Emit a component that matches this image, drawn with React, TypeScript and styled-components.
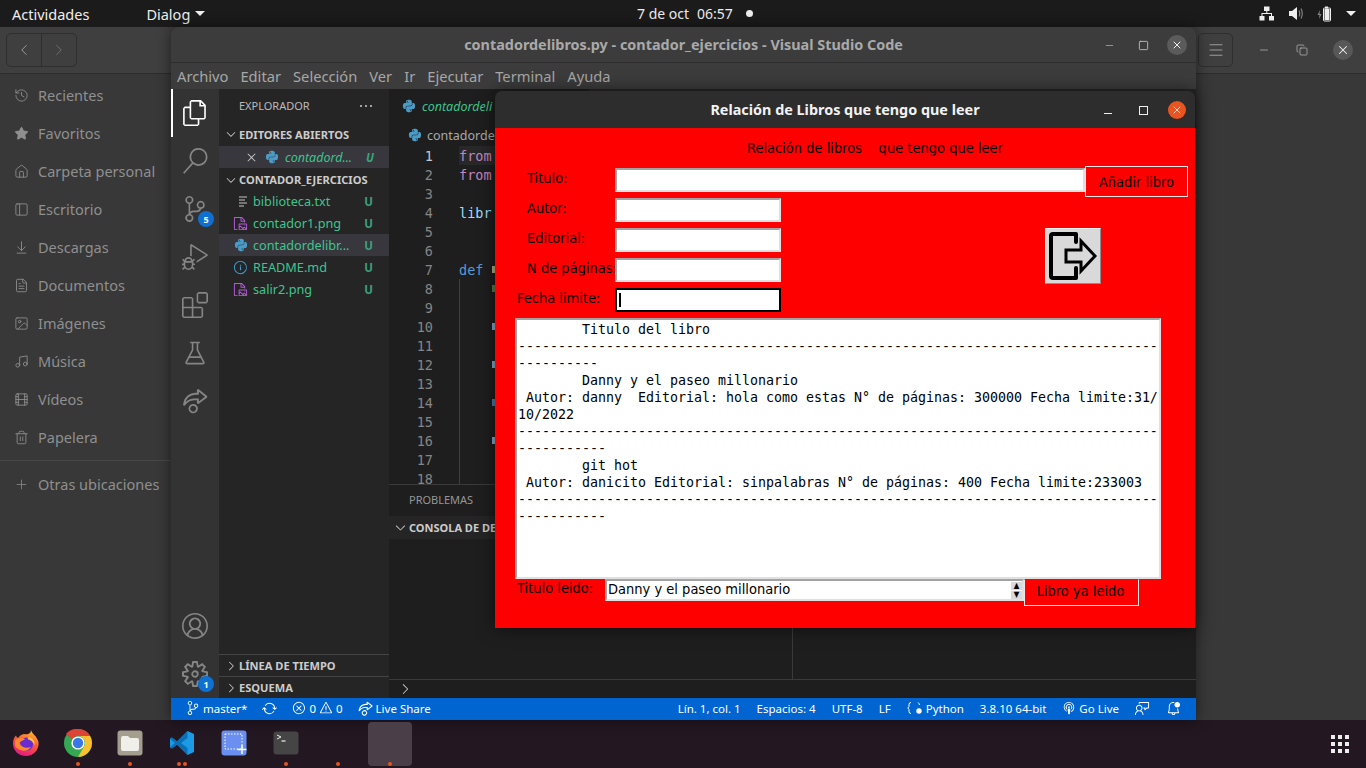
import React from 'react'
import styled, { createGlobalStyle } from 'styled-components'
import {
  VscFiles,
  VscSearch,
  VscSourceControl,
  VscDebugAlt,
  VscExtensions,
  VscBeaker,
  VscLiveShare,
  VscAccount,
  VscSettingsGear,
  VscChevronDown,
  VscChevronRight,
  VscEllipsis,
  VscClose,
  VscSync,
  VscError,
  VscWarning,
  VscBroadcast,
  VscFeedback,
  VscBellDot,
  VscFileMedia,
  VscInfo,
} from 'react-icons/vsc'
import { FaPython } from 'react-icons/fa'
import {
  History,
  Star,
  Home,
  ArrowDownToLine,
  FileText,
  Image,
  Music,
  Film,
  Trash2,
  Plus,
  PanelLeft,
  ChevronLeft,
  ChevronRight,
  Menu,
  Minus,
  Square,
  Copy,
  X,
} from 'lucide-react'

const ui = '"Noto Sans", "Open Sans", sans-serif'

const places = [
  { label: 'Recientes', Icon: History },
  { label: 'Favoritos', Icon: Star, filled: true },
  { label: 'Carpeta personal', Icon: Home },
  { label: 'Escritorio', Icon: PanelLeft },
  { label: 'Descargas', Icon: ArrowDownToLine },
  { label: 'Documentos', Icon: FileText },
  { label: 'Imágenes', Icon: Image },
  { label: 'Música', Icon: Music },
  { label: 'Vídeos', Icon: Film },
  { label: 'Papelera', Icon: Trash2 },
]

const menuItems = ['Archivo', 'Editar', 'Selección', 'Ver', 'Ir', 'Ejecutar', 'Terminal', 'Ayuda']

const files = [
  { name: 'biblioteca.txt', kind: 'text' },
  { name: 'contador1.png', kind: 'image' },
  { name: 'contadordelibr...', kind: 'python', selected: true },
  { name: 'README.md', kind: 'info' },
  { name: 'salir2.png', kind: 'image' },
]

// only what the dialog leaves uncovered of the code
const codeLines: Record<number, { text: string; color: string }> = {
  1: { text: 'from', color: '#c586c0' },
  2: { text: 'from', color: '#c586c0' },
  4: { text: 'libr', color: '#9cdcfe' },
  7: { text: 'def', color: '#569cd6' },
}

// edges of the glyphs that stick out on the left of the dialog
const codeStubs: Record<number, string> = {
  7: '#dcdcaa',
  8: '#6a9955',
  10: '#9cdcfe',
  12: '#9cdcfe',
  14: '#569cd6',
  16: '#9cdcfe',
}

const rule80 = '-'.repeat(80)

const bookText = [
  '        Titulo del libro',
  rule80,
  '----------',
  '        Danny y el paseo millonario',
  ' Autor: danny  Editorial: hola como estas N° de páginas: 300000 Fecha limite:31/',
  '10/2022',
  rule80,
  '-----------',
  '        git hot',
  ' Autor: danicito Editorial: sinpalabras N° de páginas: 400 Fecha limite:233003',
  rule80,
  '-----------',
].join('\n')

const formRows = [
  { label: 'Titulo:', indent: 32, wide: true },
  { label: 'Autor:', indent: 32 },
  { label: 'Editorial:', indent: 32 },
  { label: 'N de páginas:', indent: 32 },
  { label: 'Fecha limite:', indent: 22, focused: true },
]

function FileIcon({ kind }: { kind: string }) {
  if (kind === 'python') return <PyIcon />
  if (kind === 'image') return <MediaIcon />
  if (kind === 'info') return <InfoIcon />
  return (
    <svg width="15" height="15" viewBox="0 0 15 15">
      <path d="M6 3h8M6 6h6M6 9h8M6 12h5" stroke="#c5c5c5" strokeWidth="1.2" fill="none" />
    </svg>
  )
}

function ExitGlyph() {
  return (
    <svg width="50" height="50" viewBox="0 0 50 50">
      <path
        d="M28 11V3H5Q3 3 3 5V45Q3 47 5 47H28V37"
        fill="none"
        stroke="#000"
        strokeWidth="4"
        strokeLinecap="round"
        strokeLinejoin="round"
      />
      <path
        d="M18 19H33V10L47 25L33 40V31H18Z"
        fill="#d9d9d9"
        stroke="#000"
        strokeWidth="3"
      />
    </svg>
  )
}

function Firefox() {
  return (
    <svg width="28" height="28" viewBox="0 0 28 28">
      <defs>
        <linearGradient id="fx" x1="0.7" y1="0" x2="0.3" y2="1">
          <stop offset="0" stopColor="#ffbd2e" />
          <stop offset="0.45" stopColor="#ff5a36" />
          <stop offset="1" stopColor="#e31587" />
        </linearGradient>
      </defs>
      <path
        d="M19 1C20 5 25 7 26.5 13C27.5 21 21 27 14 27C6.5 27 1 21.5 1 14.5C1 11 2 8.5 4 6.5C4.5 8 5 8.5 6 9C7.5 6.5 10 5.5 12 5C15 6 19 5 19 1Z"
        fill="url(#fx)"
      />
      <circle cx="14.5" cy="15" r="6.6" fill="#6a2bd0" />
      <path d="M3 12C6 8 10 9 13 10C11 12 8 12 7.5 14C9 18 14 20 19 18C16 23 7 23 3 17Z" fill="#ff8a2a" />
      <path d="M17 8C21 9 23 12 22.5 16C21 13 19 11 15.5 10Z" fill="#ffc43a" />
    </svg>
  )
}

function Chrome() {
  return (
    <svg width="28" height="28" viewBox="0 0 28 28">
      <circle cx="14" cy="14" r="14" fill="#34a853" />
      <path d="M14 0A14 14 0 0 1 26.1 7H14A7 7 0 0 0 7.9 10.5L2 5A14 14 0 0 1 14 0Z" fill="#db4437" />
      <path d="M26.1 7A14 14 0 0 1 14 28L20 17.5A7 7 0 0 0 20 10.5 7 7 0 0 0 14 7Z" fill="#fbc02d" />
      <circle cx="14" cy="14" r="6.6" fill="#fff" />
      <circle cx="14" cy="14" r="5.2" fill="#3b78e7" />
    </svg>
  )
}

function FilesApp() {
  return (
    <svg width="26" height="26" viewBox="0 0 26 26">
      <rect x="0.5" y="0.5" width="25" height="25" rx="3" fill="#a39e8e" />
      <path
        d="M4 8Q4 6 6 6H11L13 8H20Q22 8 22 10V19Q22 21 20 21H6Q4 21 4 19Z"
        fill="#f1efe9"
      />
    </svg>
  )
}

function VsCodeLogo() {
  return (
    <svg width="26" height="26" viewBox="0 0 26 26">
      <path d="M18.5 1L25 4V22L18.5 25L8 14.5L3 18.5L1 17.2V8.8L3 7.5L8 11.5Z" fill="#1d9ae6" />
      <path d="M18.5 1L8 11.5L3 7.5L1 8.8L6 13L1 17.2L3 18.5L8 14.5L18.5 25V18L12 13L18.5 8Z" fill="#0b6fb8" />
    </svg>
  )
}

function ScreenshotApp() {
  return (
    <svg width="26" height="26" viewBox="0 0 26 26">
      <rect x="0.5" y="0.5" width="25" height="25" rx="3" fill="#6a8ff0" />
      <rect x="4" y="4" width="17" height="15" fill="none" stroke="#fff" strokeWidth="1" strokeDasharray="1.5 1.5" />
      <path d="M21 15V24M16.5 19.5H25.5" stroke="#fff" strokeWidth="1.4" />
    </svg>
  )
}

function TerminalApp() {
  return (
    <svg width="26" height="24" viewBox="0 0 26 24">
      <rect x="0.5" y="0.5" width="25" height="23" rx="3" fill="#454545" />
      <path d="M4 4L8 6L4 8" fill="none" stroke="#eee" strokeWidth="1" />
      <path d="M8.5 10H12.5" stroke="#eee" strokeWidth="1.2" />
    </svg>
  )
}

function NetworkGlyph() {
  return (
    <svg width="16" height="15" viewBox="0 0 16 15" fill="#eee">
      <rect x="5" y="0.5" width="5.5" height="4.5" />
      <rect x="0.5" y="10" width="5" height="4.5" />
      <rect x="10" y="10" width="5" height="4.5" />
      <path d="M7.3 5H8.3V7H13V10H12V8H3.5V10H2.5V7H7.3Z" />
    </svg>
  )
}

function VolumeGlyph() {
  return (
    <svg width="16" height="15" viewBox="0 0 16 15">
      <path d="M1 5H4L9 1V14L4 10H1Z" fill="#eee" />
      <path d="M11 4.5Q12.5 7.5 11 10.5M13 2.5Q15.5 7.5 13 12.5" fill="none" stroke="#888" strokeWidth="1.1" />
    </svg>
  )
}

function BatteryGlyph() {
  return (
    <svg width="16" height="16" viewBox="0 0 16 16">
      <path d="M3 4L0.5 9H2.5L2 13L4.5 8H2.5Z" fill="#888" />
      <rect x="8" y="0.5" width="3" height="2" fill="#eee" />
      <rect x="6.5" y="2" width="7" height="13" rx="1" fill="none" stroke="#eee" strokeWidth="1" />
      <rect x="7.5" y="3" width="5" height="11" fill="#eee" />
    </svg>
  )
}

function PythonLang() {
  return (
    <svg width="16" height="14" viewBox="0 0 16 14">
      <path d="M4 1.5Q2 1.5 2 3.5V5.5L0.8 7L2 8.5V10.5Q2 12.5 4 12.5" fill="none" stroke="#fff" strokeWidth="1" />
      <path d="M11 1.5Q12 2 12.5 4" fill="none" stroke="#fff" strokeWidth="1" />
      <circle cx="12" cy="10" r="2.7" fill="#fff" />
    </svg>
  )
}

export default function App() {
  return (
    <Screen>
      <GlobalStyle />
      <TopBar>
        <TopBarLeft>
          <TopLabel>Actividades</TopLabel>
          <AppMenu>
            Dialog <Caret />
          </AppMenu>
        </TopBarLeft>
        <Clock>
          <span>7 de oct</span>
          <span>06:57</span>
          <ClockDot />
        </Clock>
        <TopBarRight>
          <NetworkGlyph />
          <VolumeGlyph />
          <BatteryGlyph />
          <Caret />
        </TopBarRight>
      </TopBar>

      <Desktop>
        <FilesWindow>
          <FilesHeader>
            <NavGroup>
              <NavButton>
                <ChevronLeft size={18} strokeWidth={1} />
              </NavButton>
              <NavButton $muted>
                <ChevronRight size={18} strokeWidth={1} />
              </NavButton>
            </NavGroup>
            <FilesControls>
              <HamburgerButton>
                <Menu size={18} strokeWidth={1} />
              </HamburgerButton>
              <Minus size={12} color="#bbb" strokeWidth={1.4} />
              <Copy size={12} color="#bbb" strokeWidth={1.4} />
              <CloseCircle $bg="#585858">
                <X size={14} color="#eee" strokeWidth={1.8} />
              </CloseCircle>
            </FilesControls>
          </FilesHeader>
          <FilesSidebar>
            {places.map(({ label, Icon, filled }) => (
              <PlaceRow key={label}>
                <Icon size={15} strokeWidth={1.4} fill={filled ? '#8f8f8f' : 'none'} />
                {label}
              </PlaceRow>
            ))}
            <PlaceDivider />
            <OtherPlaces>
              <Plus size={15} strokeWidth={1.2} />
              Otras ubicaciones
            </OtherPlaces>
          </FilesSidebar>
        </FilesWindow>

        <CodeWindow>
          <CodeTitle>contadordelibros.py - contador_ejercicios - Visual Studio Code</CodeTitle>
          <CodeControls>
            <ControlSlot>
              <Minus size={11} color="#bbb" strokeWidth={1.5} />
            </ControlSlot>
            <ControlSlot>
              <Square size={11} color="#ddd" strokeWidth={1.6} />
            </ControlSlot>
            <CloseCircle $bg="#5b5b5b">
              <X size={12} color="#eee" strokeWidth={2} />
            </CloseCircle>
          </CodeControls>
          <MenuBar>
            {menuItems.map(item => (
              <span key={item}>{item}</span>
            ))}
          </MenuBar>
          <Workbench>
            <ActivityBar>
              <ActivityItem $active>
                <VscFiles size={26} color="#fff" />
              </ActivityItem>
              <ActivityItem>
                <VscSearch size={26} />
              </ActivityItem>
              <ActivityItem>
                <VscSourceControl size={26} />
                <ActivityBadge>5</ActivityBadge>
              </ActivityItem>
              <ActivityItem>
                <VscDebugAlt size={26} />
              </ActivityItem>
              <ActivityItem>
                <VscExtensions size={26} />
              </ActivityItem>
              <ActivityItem>
                <VscBeaker size={26} />
              </ActivityItem>
              <ActivityItem>
                <VscLiveShare size={26} />
              </ActivityItem>
              <ActivitySpacer />
              <ActivityItem>
                <VscAccount size={26} />
              </ActivityItem>
              <ActivityItem>
                <VscSettingsGear size={26} />
                <ActivityBadge>1</ActivityBadge>
              </ActivityItem>
            </ActivityBar>

            <SideBar>
              <ExplorerHead>
                EXPLORADOR
                <VscEllipsis size={16} color="#ccc" />
              </ExplorerHead>
              <SectionHead $raised>
                <VscChevronDown size={14} />
                EDITORES ABIERTOS
              </SectionHead>
              <OpenEditorRow>
                <VscClose size={15} color="#c5c5c5" />
                <PyIcon />
                <OpenEditorName>contadord...</OpenEditorName>
                <GitFlag $italic>U</GitFlag>
              </OpenEditorRow>
              <SectionHead $spaced>
                <VscChevronDown size={14} />
                CONTADOR_EJERCICIOS
              </SectionHead>
              {files.map(file => (
                <FileRow key={file.name} $selected={file.selected}>
                  <FileIconSlot>
                    <FileIcon kind={file.kind} />
                  </FileIconSlot>
                  <FileName>{file.name}</FileName>
                  <GitFlag>U</GitFlag>
                </FileRow>
              ))}
              <SideSpacer />
              <CollapsedHead>
                <VscChevronRight size={14} />
                LÍNEA DE TIEMPO
              </CollapsedHead>
              <CollapsedHead>
                <VscChevronRight size={14} />
                ESQUEMA
              </CollapsedHead>
            </SideBar>

            <EditorColumn>
              <TabStrip>
                <EditorTab>
                  <PyIcon />
                  <TabName>contadordeli</TabName>
                </EditorTab>
              </TabStrip>
              <Breadcrumb>
                <PyIcon />
                <TabName>contadorde</TabName>
              </Breadcrumb>
              <CodeArea>
                {Array.from({ length: 18 }, (_, i) => i + 1).map(n => (
                  <CodeLine key={n} $current={n === 1}>
                    <LineNumber $current={n === 1}>{n}</LineNumber>
                    {codeLines[n] && <CodeToken $color={codeLines[n].color}>{codeLines[n].text}</CodeToken>}
                    {codeStubs[n] && <CodeStub $color={codeStubs[n]} $inline={!!codeLines[n]} />}
                    {n > 7 && <IndentGuide />}
                  </CodeLine>
                ))}
              </CodeArea>
              <PanelTabs>
                <span>PROBLEMAS</span>
              </PanelTabs>
              <ConsoleHead>
                <VscChevronDown size={15} />
                CONSOLA DE DE
              </ConsoleHead>
              <ConsoleBody>
                <ConsoleDivider />
              </ConsoleBody>
              <ConsoleFoot>
                <VscChevronRight size={16} color="#ccc" />
              </ConsoleFoot>
            </EditorColumn>
          </Workbench>
          <StatusBar>
            <StatusGroup $gap={15}>
              <StatusItem>
                <VscSourceControl size={14} />
                master*
              </StatusItem>
              <VscSync size={15} />
              <StatusItem>
                <VscError size={14} />
                0
                <VscWarning size={14} />
                0
              </StatusItem>
              <StatusItem>
                <VscLiveShare size={15} />
                Live Share
              </StatusItem>
            </StatusGroup>
            <StatusGroup $gap={16}>
              <span>Lín. 1, col. 1</span>
              <span>Espacios: 4</span>
              <span>UTF-8</span>
              <span>LF</span>
              <StatusItem>
                <PythonLang />
                Python
              </StatusItem>
              <span>3.8.10 64-bit</span>
              <StatusItem>
                <VscBroadcast size={14} />
                Go Live
              </StatusItem>
              <VscFeedback size={15} />
              <VscBellDot size={15} />
            </StatusGroup>
          </StatusBar>
        </CodeWindow>

        <DialogWindow>
          <DialogTitleBar>
            Relación de Libros que tengo que leer
            <DialogControls>
              <ControlSlot>
                <DialogMinimize />
              </ControlSlot>
              <ControlSlot>
                <DialogMaximize />
              </ControlSlot>
              <CloseCircle $bg="#e95420" $small>
                <X size={12} color="#fff" strokeWidth={1.5} />
              </CloseCircle>
            </DialogControls>
          </DialogTitleBar>
          <DialogBody>
            <Heading>Relación de libros&nbsp;&nbsp;&nbsp; que tengo que leer</Heading>
            <FormGrid>
              {formRows.map((row, i) => (
                <React.Fragment key={row.label}>
                  <FormLabel $indent={row.indent} $row={i + 1}>
                    {row.label}
                  </FormLabel>
                  <Entry $wide={row.wide} $focused={row.focused} $row={i + 1}>
                    {row.focused && <EntryCursor />}
                  </Entry>
                </React.Fragment>
              ))}
              <AddButton>Añadir libro</AddButton>
              <ExitButton>
                <ExitGlyph />
              </ExitButton>
            </FormGrid>
            <BookList>{bookText}</BookList>
            <ReadRow>
              <ReadLabel>Titulo leido:</ReadLabel>
              <SpinBox>
                Danny y el paseo millonario
                <SpinArrows>
                  <SpinArrow>▲</SpinArrow>
                  <SpinArrow>▼</SpinArrow>
                </SpinArrows>
              </SpinBox>
              <ReadButton>Libro ya leido</ReadButton>
            </ReadRow>
          </DialogBody>
        </DialogWindow>
      </Desktop>

      <Dock>
        <DockItem>
          <Firefox />
        </DockItem>
        <DockItem $dots={1}>
          <Chrome />
        </DockItem>
        <DockItem $dots={1}>
          <FilesApp />
        </DockItem>
        <DockItem $dots={2}>
          <VsCodeLogo />
        </DockItem>
        <DockItem>
          <ScreenshotApp />
        </DockItem>
        <DockItem $dots={1}>
          <TerminalApp />
        </DockItem>
        <DockItem $dots={1} />
        <DockItem $dots={1} $active />
        <DockSpacer />
        <AppGrid>
          {Array.from({ length: 9 }, (_, i) => (
            <AppGridDot key={i} />
          ))}
        </AppGrid>
      </Dock>
    </Screen>
  )
}

const GlobalStyle = createGlobalStyle`
  html, body {
    margin: 0;
    padding: 0;
    background: #000;
    overflow: hidden;
  }
  * {
    box-sizing: border-box;
  }
`

const Screen = styled.div`
  width: 1366px;
  height: 768px;
  display: flex;
  flex-direction: column;
  overflow: hidden;
  font-family: ${ui};
`

const TopBar = styled.header`
  height: 27px;
  flex: none;
  display: flex;
  align-items: center;
  justify-content: space-between;
  position: relative;
  padding: 0 10px 0 12px;
  background: #1b1b1b;
  color: #eee;
  font-size: 14.5px;
`

const TopBarLeft = styled.div`
  display: flex;
  align-items: center;
  gap: 57px;
`

const TopLabel = styled.span``

const AppMenu = styled.span`
  display: flex;
  align-items: center;
  gap: 5px;
`

const Caret = styled.i`
  width: 0;
  height: 0;
  border-left: 5px solid transparent;
  border-right: 5px solid transparent;
  border-top: 5px solid #eee;
`

const Clock = styled.div`
  position: absolute;
  left: 637px;
  top: 0;
  height: 27px;
  display: flex;
  align-items: center;
  gap: 8px;
  font-size: 14px;
`

const ClockDot = styled.i`
  width: 7px;
  height: 7px;
  margin-left: 5px;
  border-radius: 50%;
  background: #eee;
`

const TopBarRight = styled.div`
  display: flex;
  align-items: center;
  gap: 13px;
`

const Desktop = styled.main`
  flex: 1;
  position: relative;
  min-height: 0;
`

const FilesWindow = styled.section`
  position: absolute;
  inset: 0;
  display: flex;
  flex-direction: column;
  background: #383838;
`

const FilesHeader = styled.div`
  height: 47px;
  flex: none;
  display: flex;
  align-items: center;
  justify-content: space-between;
  padding: 0 0 0 6px;
  background: #3f3f3f;
  border-bottom: 1px solid #2b2b2b;
`

const NavGroup = styled.div`
  display: flex;
  width: 71px;
  height: 34px;
  border: 1px solid #2e2e2e;
  border-radius: 5px;
`

const NavButton = styled.div<{ $muted?: boolean }>`
  flex: 1;
  display: flex;
  align-items: center;
  justify-content: center;
  color: ${p => (p.$muted ? '#808080' : '#bbb')};
  & + & {
    border-left: 1px solid #2e2e2e;
  }
`

const FilesControls = styled.div`
  width: 168px;
  display: flex;
  align-items: center;
  justify-content: space-between;
  padding-right: 13px;
`

const HamburgerButton = styled.div`
  width: 35px;
  height: 34px;
  display: flex;
  align-items: center;
  justify-content: center;
  border: 1px solid #2e2e2e;
  border-radius: 5px;
  color: #bbb;
`

const CloseCircle = styled.div<{ $bg: string; $small?: boolean }>`
  width: ${p => (p.$small ? 18 : 20)}px;
  height: ${p => (p.$small ? 18 : 20)}px;
  flex: none;
  display: flex;
  align-items: center;
  justify-content: center;
  border-radius: 50%;
  background: ${p => p.$bg};
`

const ControlSlot = styled.div`
  width: 20px;
  height: 20px;
  flex: none;
  display: flex;
  align-items: center;
  justify-content: center;
`

const FilesSidebar = styled.nav`
  width: 171px;
  flex: 1;
  padding-top: 2px;
  color: #8f8f8f;
  font-size: 14.5px;
`

const PlaceRow = styled.div`
  height: 38px;
  display: flex;
  align-items: center;
  gap: 9px;
  padding-left: 14px;
  white-space: nowrap;
`

const PlaceDivider = styled.div`
  height: 1px;
  margin: 4px 0 3px;
  background: #474747;
`

const OtherPlaces = styled(PlaceRow)`
  height: 40px;
`

const CodeWindow = styled.section`
  position: absolute;
  left: 171px;
  top: 0;
  width: 1025px;
  bottom: 0;
  display: flex;
  flex-direction: column;
  border-radius: 8px 8px 0 0;
  background: #3c3c3c;
  box-shadow: 0 0 14px rgba(0, 0, 0, 0.5);
  overflow: hidden;
`

const CodeTitle = styled.div`
  height: 36px;
  flex: none;
  display: flex;
  align-items: center;
  justify-content: center;
  border-bottom: 1px solid #2e2e2e;
  color: #a9a9a9;
  font-size: 14.4px;
  font-weight: 700;
`

const CodeControls = styled.div`
  position: absolute;
  top: 8px;
  right: 9px;
  display: flex;
  align-items: center;
  gap: 14px;
`

const MenuBar = styled.nav`
  height: 26px;
  flex: none;
  display: flex;
  align-items: center;
  gap: 12px;
  padding-left: 6px;
  color: #a7a7a7;
  font-size: 14.7px;
`

const Workbench = styled.div`
  flex: 1;
  min-height: 0;
  display: flex;
`

const ActivityBar = styled.div`
  width: 48px;
  flex: none;
  display: flex;
  flex-direction: column;
  background: #333;
  color: #858585;
`

const ActivityItem = styled.div<{ $active?: boolean }>`
  height: 48px;
  flex: none;
  position: relative;
  display: flex;
  align-items: center;
  justify-content: center;
  border-left: 2px solid ${p => (p.$active ? '#fff' : 'transparent')};
  padding-right: 2px;
`

const ActivityBadge = styled.span`
  position: absolute;
  right: 5px;
  bottom: 6px;
  width: 16px;
  height: 16px;
  display: flex;
  align-items: center;
  justify-content: center;
  border-radius: 50%;
  background: #0e70d1;
  color: #fff;
  font-size: 9px;
  font-weight: 700;
`

const ActivitySpacer = styled.div`
  flex: 1;
`

const SideBar = styled.aside`
  width: 170px;
  flex: none;
  display: flex;
  flex-direction: column;
  background: #252526;
  color: #bbb;
  font-size: 11px;
`

const ExplorerHead = styled.div`
  height: 35px;
  flex: none;
  display: flex;
  align-items: center;
  justify-content: space-between;
  padding: 0 15px 2px 20px;
  font-size: 11px;
  color: #bbb;
`

const SectionHead = styled.div<{ $spaced?: boolean; $raised?: boolean }>`
  height: ${p => (p.$spaced ? 21 : 22)}px;
  flex: none;
  display: flex;
  align-items: center;
  gap: 1px;
  padding: 0 0 ${p => (p.$raised ? 2 : 0)}px 5px;
  margin-top: ${p => (p.$spaced ? 1 : 0)}px;
  font-weight: 700;
  font-size: 11.1px;
  color: #ccc;
  white-space: nowrap;
`

const OpenEditorRow = styled.div`
  height: 22px;
  flex: none;
  display: flex;
  align-items: center;
  gap: 6px;
  padding: 0 15px 0 25px;
  background: #37373d;
`

const OpenEditorName = styled.span`
  flex: 1;
  font-size: 12.5px;
  font-style: italic;
  white-space: nowrap;
  color: #3fc48d;
`

const PyIcon = styled(FaPython).attrs({ size: 14 })`
  flex: none;
  color: #4b9bc7;
`

const MediaIcon = styled(VscFileMedia).attrs({ size: 15 })`
  flex: none;
  color: #b45cd6;
`

const InfoIcon = styled(VscInfo).attrs({ size: 15 })`
  flex: none;
  color: #3d9fd9;
`

const GitFlag = styled.span<{ $italic?: boolean }>`
  font-size: 11.5px;
  font-weight: 700;
  font-style: ${p => (p.$italic ? 'italic' : 'normal')};
  color: #3aa17b;
`

const FileRow = styled.div<{ $selected?: boolean }>`
  height: 22px;
  flex: none;
  display: flex;
  align-items: center;
  gap: 5px;
  padding: 0 16px 0 14px;
  background: ${p => (p.$selected ? '#37373d' : 'transparent')};
`

const FileIconSlot = styled.span`
  width: 15px;
  flex: none;
  display: flex;
  justify-content: center;
`

const FileName = styled.span`
  flex: 1;
  white-space: nowrap;
  font-size: 12.7px;
  color: #3fc48d;
`

const SideSpacer = styled.div`
  flex: 1;
`

const CollapsedHead = styled(SectionHead)`
  height: 22px;
  border-top: 1px solid #444;
`

const EditorColumn = styled.div`
  flex: 1;
  min-width: 0;
  display: flex;
  flex-direction: column;
  background: #1e1e1e;
  font-family: 'DejaVu Sans Mono', monospace;
`

const TabStrip = styled.div`
  height: 36px;
  flex: none;
  background: #252526;
`

const EditorTab = styled.div`
  height: 36px;
  width: 200px;
  display: flex;
  align-items: center;
  gap: 6px;
  padding: 0 0 2px 13px;
  background: #1e1e1e;
  color: #3fc48d;
  font: italic 12.5px ${ui};
  white-space: nowrap;
`

const TabName = styled.span`
  white-space: nowrap;
`

const Breadcrumb = styled.div`
  height: 20px;
  flex: none;
  display: flex;
  align-items: center;
  gap: 5px;
  padding-left: 19px;
  color: #a9a9a9;
  font: 12.5px ${ui};
  white-space: nowrap;
`

const CodeArea = styled.div`
  height: 340px;
  flex: none;
  overflow: hidden;
  padding-top: 1px;
  border-bottom: 1px solid #3a3a3a;
`

const CodeLine = styled.div<{ $current?: boolean }>`
  height: 19px;
  display: flex;
  align-items: center;
  position: relative;
  font-size: 13.5px;
  white-space: pre;
  background: ${p => (p.$current ? 'linear-gradient(90deg, transparent 70px, #282828 70px)' : 'none')};
`

const LineNumber = styled.span<{ $current?: boolean }>`
  width: 70px;
  flex: none;
  padding-right: 26px;
  text-align: right;
  color: ${p => (p.$current ? '#c6c6c6' : '#858585')};
`

const CodeToken = styled.span<{ $color: string }>`
  color: ${p => p.$color};
`

const CodeStub = styled.i<{ $color: string; $inline: boolean }>`
  width: 3px;
  height: 7px;
  margin-left: ${p => (p.$inline ? 9 : 33)}px;
  background: ${p => p.$color};
  opacity: 0.75;
`

const IndentGuide = styled.i`
  position: absolute;
  left: 70px;
  top: 0;
  bottom: 0;
  width: 1px;
  background: #404040;
`

const PanelTabs = styled.div`
  height: 27px;
  flex: none;
  display: flex;
  align-items: center;
  padding: 1px 0 0 20px;
  color: #969696;
  font: 11px ${ui};
`

const ConsoleHead = styled.div`
  height: 23px;
  margin-top: 4px;
  flex: none;
  display: flex;
  align-items: center;
  gap: 1px;
  padding-left: 4px;
  background: #252526;
  color: #ccc;
  font: 700 11px ${ui};
  white-space: nowrap;
`

const ConsoleBody = styled.div`
  flex: 1;
  display: flex;
  padding-left: 403px;
`

const ConsoleDivider = styled.div`
  width: 1px;
  background: #3a3a3a;
`

const ConsoleFoot = styled.div`
  height: 19px;
  flex: none;
  display: flex;
  align-items: center;
  padding-left: 8px;
  border-top: 1px solid #3a3a3a;
`

const StatusBar = styled.footer`
  height: 22px;
  flex: none;
  display: flex;
  align-items: center;
  justify-content: space-between;
  padding: 0 15px 2px 15px;
  background: #0065d1;
  color: #fff;
  font-size: 11.5px;
`

const StatusGroup = styled.div<{ $gap: number }>`
  display: flex;
  align-items: center;
  gap: ${p => p.$gap}px;
`

const StatusItem = styled.span`
  display: flex;
  align-items: center;
  gap: 3px;
`

const DialogWindow = styled.section`
  position: absolute;
  left: 495px;
  top: 64px;
  width: 700px;
  height: 537px;
  display: flex;
  flex-direction: column;
  border-radius: 7px 7px 0 0;
  box-shadow: 0 0 18px rgba(0, 0, 0, 0.55);
  overflow: hidden;
`

const DialogTitleBar = styled.div`
  height: 37px;
  flex: none;
  display: flex;
  align-items: center;
  justify-content: center;
  position: relative;
  background: #2d2d2d;
  color: #f2f2f2;
  font-size: 14.4px;
  font-weight: 700;
`

const DialogControls = styled.div`
  position: absolute;
  right: 9px;
  top: 9px;
  display: flex;
  align-items: center;
  gap: 15px;
`

const DialogMinimize = styled.i`
  width: 8px;
  height: 1px;
  margin-top: 7px;
  background: #eee;
`

const DialogMaximize = styled.i`
  width: 9px;
  height: 9px;
  border: 1px solid #eee;
`

const DialogBody = styled.div`
  flex: 1;
  background: #f00;
  color: #000;
  font-family: 'DejaVu Sans Condensed', 'DejaVu Sans', sans-serif;
  font-size: 14.5px;
  font-stretch: condensed;
`

const Heading = styled.div`
  height: 39px;
  padding: 12px 0 0 252px;
  line-height: 17px;
  white-space: nowrap;
`

const FormGrid = styled.div`
  display: grid;
  grid-template-columns: 120px 166px 264px 40px 16px 87px;
  grid-template-rows: repeat(5, 30px);
`

const FormLabel = styled.div<{ $indent: number; $row: number }>`
  grid-column: 1;
  grid-row: ${p => p.$row};
  padding: 3px 0 0 ${p => p.$indent}px;
  line-height: 17px;
  white-space: nowrap;
`

const Entry = styled.div<{ $wide?: boolean; $focused?: boolean; $row: number }>`
  grid-column: ${p => (p.$wide ? '2 / span 3' : '2')};
  grid-row: ${p => p.$row};
  height: 24px;
  margin-top: 1px;
  padding: 3px 0 3px 2px;
  background: #fff;
  border: ${p => (p.$focused ? '2px solid #000' : '2px solid')};
  border-color: ${p => (p.$focused ? '#000' : '#a3a3a3 #e0e0e0 #e0e0e0 #a3a3a3')};
`

const EntryCursor = styled.i`
  display: block;
  width: 2px;
  height: 100%;
  background: #000;
`

const AddButton = styled.div`
  grid-column: 5 / span 2;
  grid-row: 1;
  height: 31px;
  margin-top: -1px;
  display: flex;
  align-items: center;
  justify-content: center;
  background: #f00;
  border: 1px solid #e8e8e8;
  z-index: 1;
`

const ExitButton = styled.div`
  grid-column: 4 / span 2;
  grid-row: 3 / span 2;
  width: 56px;
  height: 56px;
  margin-top: 1px;
  display: flex;
  align-items: center;
  justify-content: center;
  background: #d9d9d9;
  border: 1px solid;
  border-color: #f2f2f2 #8e8e8e #8e8e8e #f2f2f2;
`

const BookList = styled.pre`
  width: 646px;
  height: 261px;
  margin: 1px 0 0 20px;
  padding: 1px 0 0 1px;
  background: #fff;
  border: 2px solid;
  border-color: #a3a3a3 #e0e0e0 #e0e0e0 #a3a3a3;
  font-family: 'DejaVu Sans Mono', monospace;
  font-size: 13.3px;
  font-stretch: normal;
  line-height: 17px;
  letter-spacing: -0.007px;
`

const ReadRow = styled.div`
  display: flex;
  align-items: flex-start;
  padding-left: 22px;
`

const ReadLabel = styled.div`
  width: 88px;
  padding-top: 1px;
  line-height: 17px;
  white-space: nowrap;
`

const SpinBox = styled.div`
  width: 419px;
  height: 22px;
  display: flex;
  align-items: center;
  justify-content: space-between;
  padding: 0 0 2px 1px;
  background: #fff;
  border: 2px solid;
  border-color: #a3a3a3 #e0e0e0 #e0e0e0 #a3a3a3;
`

const SpinArrows = styled.div`
  width: 11px;
  margin-bottom: -2px;
  display: flex;
  flex-direction: column;
  gap: 1px;
`

const SpinArrow = styled.span`
  height: 8px;
  display: flex;
  align-items: center;
  justify-content: center;
  background: #d9d9d9;
  font-size: 8px;
  line-height: 1;
`

const ReadButton = styled.div`
  width: 115px;
  height: 27px;
  display: flex;
  align-items: center;
  justify-content: center;
  padding: 0 2px 3px 0;
  border: 1px solid #e8e8e8;
  border-top-color: #f00;
  white-space: nowrap;
`

const Dock = styled.footer`
  height: 48px;
  flex: none;
  display: flex;
  align-items: center;
  padding: 0 0 0 4px;
  background: #231722;
`

const DockItem = styled.div<{ $dots?: number; $active?: boolean }>`
  width: 44px;
  height: 44px;
  margin-right: 8px;
  flex: none;
  position: relative;
  display: flex;
  align-items: center;
  justify-content: center;
  padding-bottom: 2px;
  border-radius: 4px;
  background: ${p => (p.$active ? '#4a3f49' : 'none')};
  &::after {
    content: '';
    display: ${p => (p.$dots ? 'block' : 'none')};
    position: absolute;
    bottom: 0;
    left: 50%;
    width: 4px;
    height: 4px;
    margin-left: ${p => (p.$dots === 2 ? -5 : -2)}px;
    border-radius: 50%;
    background: #e95420;
    box-shadow: ${p => (p.$dots === 2 ? '6px 0 0 #e95420' : 'none')};
  }
`

const DockSpacer = styled.div`
  flex: 1;
`

const AppGrid = styled.div`
  width: 18px;
  height: 18px;
  margin-right: 17px;
  display: grid;
  grid-template-columns: repeat(3, 4px);
  justify-content: space-between;
  align-content: space-between;
`

const AppGridDot = styled.i`
  width: 4px;
  height: 4px;
  background: #eee;
`
